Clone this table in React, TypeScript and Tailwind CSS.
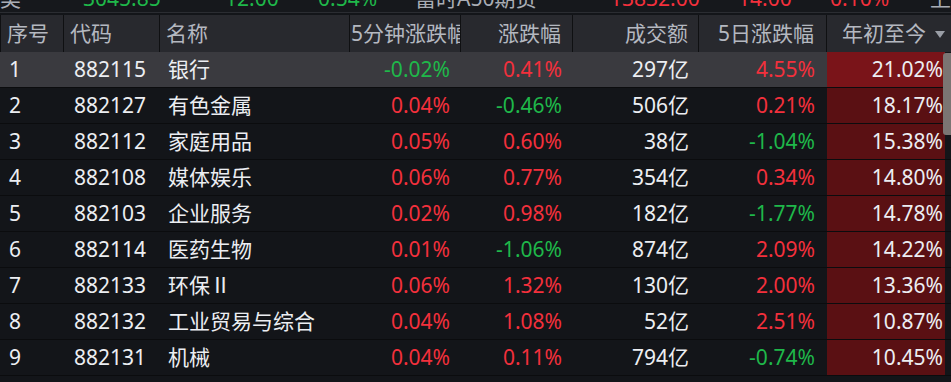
import React from "react";

type Row = {
  no: number;
  code: string;
  name: string;
  m5: string;
  chg: string;
  amount: string;
  d5: string;
  ytd: string;
};

const rows: Row[] = [
  { no: 1, code: "882115", name: "银行", m5: "-0.02%", chg: "0.41%", amount: "297亿", d5: "4.55%", ytd: "21.02%" },
  { no: 2, code: "882127", name: "有色金属", m5: "0.04%", chg: "-0.46%", amount: "506亿", d5: "0.21%", ytd: "18.17%" },
  { no: 3, code: "882112", name: "家庭用品", m5: "0.05%", chg: "0.60%", amount: "38亿", d5: "-1.04%", ytd: "15.38%" },
  { no: 4, code: "882108", name: "媒体娱乐", m5: "0.06%", chg: "0.77%", amount: "354亿", d5: "0.34%", ytd: "14.80%" },
  { no: 5, code: "882103", name: "企业服务", m5: "0.02%", chg: "0.98%", amount: "182亿", d5: "-1.77%", ytd: "14.78%" },
  { no: 6, code: "882114", name: "医药生物", m5: "0.01%", chg: "-1.06%", amount: "874亿", d5: "2.09%", ytd: "14.22%" },
  { no: 7, code: "882133", name: "环保Ⅱ", m5: "0.06%", chg: "1.32%", amount: "130亿", d5: "2.00%", ytd: "13.36%" },
  { no: 8, code: "882132", name: "工业贸易与综合", m5: "0.04%", chg: "1.08%", amount: "52亿", d5: "2.51%", ytd: "10.87%" },
  { no: 9, code: "882131", name: "机械", m5: "0.04%", chg: "0.11%", amount: "794亿", d5: "-0.74%", ytd: "10.45%" },
];

// 涨红跌绿
const tone = (v: string) => (v.startsWith("-") ? "text-[#1fb84a]" : "text-[#f3303c]");

const font = { fontFamily: '"Noto Sans", "Noto Sans CJK SC", sans-serif' };

const App = () => {
  return (
    <div className="w-[951px] h-[382px] overflow-hidden bg-[#131519] text-[21px]" style={font}>
      {/* 顶部行情条（被截断） */}
      <div className="h-[13px] overflow-hidden bg-[#16181c] border-b border-[#2b2d32]">
        <div className="flex items-start -mt-[15px] whitespace-nowrap leading-[26px]">
          <span className="w-[83px] text-[#a9adb5]">类</span>
          <span className="w-[142px] text-[#1fb84a]">3045.85</span>
          <span className="w-[93px] text-[#1fb84a]">12.00</span>
          <span className="w-[97px] text-[#1fb84a]">0.54%</span>
          <span className="w-[195px] text-[#a9adb5]">富时A50期货</span>
          <span className="w-[128px] text-[#f3303c]">13832.00</span>
          <span className="w-[92px] text-[#f3303c]">14.00</span>
          <span className="w-[100px] text-[#f3303c]">0.10%</span>
          <span className="text-[#a9adb5]">上</span>
        </div>
      </div>

      {/* 表头 */}
      <div className="mt-[2px] flex h-[37px] bg-[#28292e] border-l border-[#0f1012] text-[#b4b8c0]">
        <div className="w-[63px] flex items-center pl-[6px] border-r border-[#0f1012]">序号</div>
        <div className="w-[96px] flex items-center pl-[6px] border-r border-[#0f1012]">代码</div>
        <div className="w-[190px] flex items-center pl-[6px] border-r border-[#0f1012]">名称</div>
        <div className="w-[111px] flex items-center overflow-hidden whitespace-nowrap pl-[1px] border-r border-[#0f1012]">
          <span className="shrink-0">5分钟涨跌幅</span>
        </div>
        <div className="w-[112px] flex items-center justify-end pr-[11px] border-r border-[#0f1012]">涨跌幅</div>
        <div className="w-[126px] flex items-center justify-end pr-[10px] border-r border-[#0f1012]">成交额</div>
        <div className="w-[128px] flex items-center justify-end pr-[12px] border-r border-[#0f1012]">5日涨跌幅</div>
        <div className="flex-1 flex items-center pl-[15px] gap-[9px]">
          年初至今
          <svg width="10" height="7" viewBox="0 0 10 7" className="mt-[1px]">
            <path d="M0 0 L10 0 L5 7 Z" fill="#9a9ea6" />
          </svg>
        </div>
      </div>

      {/* 数据行 */}
      <div className="relative">
        {rows.map((r, i) => (
          <div
            key={r.no}
            className={`flex h-[36px] items-center border-b border-[#0b0c0e] ${i === 0 ? "bg-[#3a3a3f]" : "bg-[#131519]"}`}
          >
            <div className="w-[64px] pl-[9px] text-[#eceef2]">{r.no}</div>
            <div className="w-[96px] pl-[10px] text-[#eceef2]">{r.code}</div>
            <div className="w-[190px] pl-[8px] text-[#eceef2] whitespace-nowrap">{r.name}</div>
            <div className={`w-[111px] pr-[11px] text-right ${tone(r.m5)}`}>{r.m5}</div>
            <div className={`w-[112px] pr-[11px] text-right ${tone(r.chg)}`}>{r.chg}</div>
            <div className="w-[126px] pr-[10px] text-right text-[#eceef2]">{r.amount}</div>
            <div className={`w-[128px] pr-[12px] text-right ${tone(r.d5)}`}>{r.d5}</div>
            <div
              className={`w-[118px] h-full flex items-center justify-end pr-[2px] text-[#eceef2] ${i === 0 ? "bg-[#7a1419]" : "bg-[#5a1013]"}`}
            >
              {r.ytd}
            </div>
            <div className="flex-1 h-full bg-[#131519]" />
          </div>
        ))}
        {/* 滚动条 */}
        <div className="absolute right-0 top-[1px] w-[8px] h-[82px] rounded-l-[3px] bg-[#7b7573]" />
      </div>
    </div>
  );
};

export default App;
